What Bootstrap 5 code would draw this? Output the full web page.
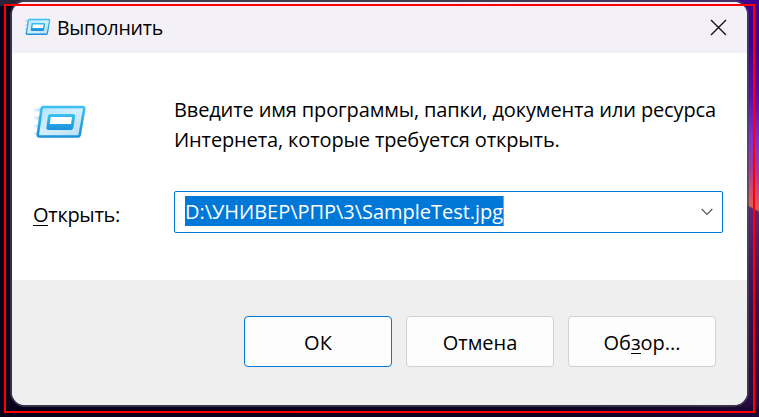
<!DOCTYPE html>
<html lang="ru">
<head>
<meta charset="utf-8">
<meta name="viewport" content="width=device-width, initial-scale=1">
<title>Выполнить</title>
<link href="https://cdn.jsdelivr.net/npm/bootstrap@5.3.0/dist/css/bootstrap.min.css" rel="stylesheet">
<style>
body{width:759px;height:417px;font-family:"Open Sans","Noto Sans",sans-serif;font-size:20px;line-height:30px;color:#000;background:#0a001e}
.desktop{width:759px;height:417px;padding:0 10px 10px;
 background:
  linear-gradient(90deg,#09001c,#0b0020 70%,#1c0636) 0 407px/759px 10px no-repeat,
  linear-gradient(90deg,#2a2438,#2a2438 60%,#3f0093) 0 0/739px 6px no-repeat,
  linear-gradient(28deg,#24093c 0,#3a1150 100px,#5c2274 172px,#5f2478 181px,#e0605a 183px,#c8487a 200px,#a8389e 216px,#8030d8 242px,#5a10b4 280px,#3f0093 325px) 739px 0/20px 407px no-repeat,
  #0a001e}
.dialog-frame{border:2px solid rgba(72,70,88,.72);border-radius:15px;height:407px}
.dialog-frame .modal-content{height:403px;border-radius:13px;overflow:hidden;background:#fff;background-clip:padding-box}
.titlebar{height:51px;background:#f3f0f7;padding:0 20px 1px 12px}
.titletext{font-size:19.500px;letter-spacing:-.23px;margin-left:6px;padding-top:2px}
.main-area{height:227px;padding:42px 24px 0 21px}
.message{letter-spacing:-.13px}
.actions{height:125px;background:#efefef;padding:36px 31px 0 0;gap:14px}
.openrow{margin-top:36px}
.labeltext{letter-spacing:-.3px;padding-top:5px}
.runfield{width:549px;height:42px;border:1px solid #0078d4;border-radius:2px;padding:0 9px 0 10px}
.picked{background:#0078d7;color:#fff;line-height:32px;height:30px;margin-bottom:2px;letter-spacing:-.03px;border-right:1px solid #e08a4c}
.action{--bs-btn-bg:#fdfdfd;--bs-btn-color:#000;--bs-btn-border-color:#d0d0d0;--bs-btn-border-radius:4px;width:148px;height:51px;padding:2px 0 0;font-size:20px}
.action-main{--bs-btn-border-color:#0078d4}
.key{border-bottom:1px solid #000;display:inline-block;line-height:20px}
.capture{inset:4px;border:2px solid #f00;pointer-events:none}
.labelcol{width:141px}
.bigicon{margin-top:9px}
</style>
</head>
<body class="overflow-hidden">
<svg width="0" height="0" class="position-absolute" aria-hidden="true">
 <defs>
  <linearGradient id="edge" x1="0" y1="0" x2="0" y2="1"><stop offset="0" stop-color="#3cc0f0"/><stop offset="1" stop-color="#1c92dc"/></linearGradient>
  <linearGradient id="face" x1="0" y1="0" x2="1" y2="1"><stop offset="0" stop-color="#aee5fb"/><stop offset=".5" stop-color="#d4eefb"/><stop offset="1" stop-color="#b4ddf6"/></linearGradient>
  <linearGradient id="trail" gradientUnits="userSpaceOnUse" x1="0" y1="0" x2="10" y2="0"><stop offset="0" stop-color="#9bdcf8" stop-opacity=".15"/><stop offset="1" stop-color="#7cccf0"/></linearGradient>
  <symbol id="run" viewBox="0 0 54 36">
   <path d="M1 4.500h10v3H1zM1 12.500h9v3H1zM1 20.500h8v3H1zM1 28h6v3H1z" fill="url(#trail)"/>
   <path d="M10.500 3H49.500Q51.500 3 51.200 5L46.800 30.500Q46.500 32.500 44.500 32.500H6.500Q4.500 32.500 4.800 30.500L8.500 5Q8.800 3 10.500 3Z" fill="url(#face)" stroke="url(#edge)" stroke-width="2.600"/>
   <path d="M17.500 10H40Q42.500 10 42.200 12.500L40.500 23Q40 26 37.500 26H15.500Q13 26 13.500 23L14.800 12.500Q15 10 17.500 10Z" fill="url(#edge)"/>
   <path d="M17.800 13H39L38 20H16.800Z" fill="#fff"/>
  </symbol>
 </defs>
</svg>
<main class="desktop position-relative">
 <div class="dialog-frame">
  <section class="modal-content border-0" role="dialog" aria-label="Выполнить">
   <header class="titlebar d-flex align-items-center">
    <svg width="27" height="18"><use href="#run"/></svg>
    <span class="titletext">Выполнить</span>
    <svg class="ms-auto" width="17" height="17" viewBox="0 0 17 17" fill="none" stroke="#111" stroke-width="1.400"><path d="M1 1L16 16M16 1L1 16"/></svg>
   </header>
   <div class="main-area">
    <div class="d-flex">
     <div class="labelcol"><svg width="54" height="36" class="bigicon d-block"><use href="#run"/></svg></div>
     <div class="message text-nowrap">Введите имя программы, папки, документа или ресурса<br>Интернета, которые требуется открыть.</div>
    </div>
    <div class="openrow d-flex align-items-center">
     <label class="labelcol labeltext"><span class="key">О</span>ткрыть:</label>
     <div class="runfield d-flex align-items-center flex-shrink-0">
      <span class="picked">D:\УНИВЕР\РПР\3\SampleTest.jpg</span>
      <svg class="ms-auto" width="12" height="8" viewBox="0 0 12 8" fill="none" stroke="#555" stroke-width="1.200"><path d="M.7 1L6 6.300L11.300 1"/></svg>
     </div>
    </div>
   </div>
   <footer class="actions d-flex justify-content-end">
    <button type="button" class="btn action action-main">ОК</button>
    <button type="button" class="btn action">Отмена</button>
    <button type="button" class="btn action">Об<span class="key">з</span>ор...</button>
   </footer>
  </section>
 </div>
 <div class="capture position-absolute"></div>
</main>
<script src="https://cdn.jsdelivr.net/npm/bootstrap@5.3.0/dist/js/bootstrap.bundle.min.js"></script>
</body>
</html>
